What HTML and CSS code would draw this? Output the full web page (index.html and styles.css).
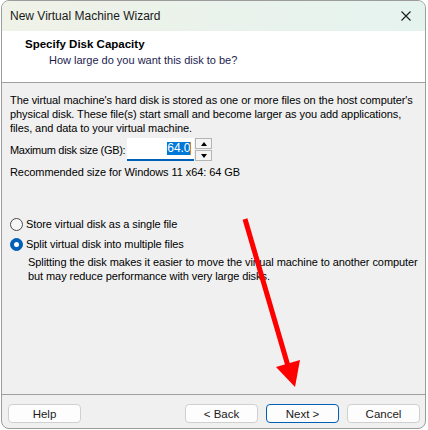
FILE: index.html
```html
<!DOCTYPE html>
<html lang="en">
<head>
    <meta charset="UTF-8">
    <title>New Virtual Machine Wizard</title>
    <link rel="stylesheet" href="styles.css">
</head>
<body>

    <div class="wizard">
        <!-- Title bar -->
        <div class="titlebar">
            <span class="title">New Virtual Machine Wizard</span>
            <svg class="close" width="10" height="10" viewBox="0 0 10 10">
                <path d="M0.5 0.5 L9.5 9.5 M9.5 0.5 L0.5 9.5" stroke="#1a1a1a" stroke-width="1.1" fill="none"/>
            </svg>
        </div>

        <!-- Page header -->
        <div class="header">
            <div class="header-title">Specify Disk Capacity</div>
            <div class="header-sub">How large do you want this disk to be?</div>
        </div>

        <!-- Page body -->
        <div class="content">
            <p class="intro">The virtual machine's hard disk is stored as one or more files on the host computer's physical disk. These file(s) start small and become larger as you add applications, files, and data to your virtual machine.</p>

            <div class="size-row">
                <label class="size-label">Maximum disk size (GB):</label>
                <div class="spin-input"><span class="selected">64.0</span><span class="caret"></span></div>
                <div class="spin-buttons">
                    <div class="spin-btn"><span class="tri-up"></span></div>
                    <div class="spin-btn"><span class="tri-down"></span></div>
                </div>
            </div>

            <p class="recommended">Recommended size for Windows 11 x64: 64 GB</p>

            <div class="options">
                <div class="radio-row"><span class="radio"></span>Store virtual disk as a single file</div>
                <div class="radio-row"><span class="radio checked"></span>Split virtual disk into multiple files</div>
            </div>
            <p class="note">Splitting the disk makes it easier to move the virtual machine to another computer<br>but may reduce performance with very large disks.</p>
        </div>

        <!-- Buttons -->
        <div class="footer">
            <button class="btn">Help</button>
            <div class="nav">
                <button class="btn">&lt; Back</button>
                <button class="btn default">Next &gt;</button>
                <button class="btn">Cancel</button>
            </div>
        </div>
    </div>

    <!-- Red pointer arrow -->
    <svg class="arrow" width="428" height="430" viewBox="0 0 428 430">
        <line x1="245" y1="219" x2="288" y2="366" stroke="#ff0000" stroke-width="5"/>
        <polygon points="276,367 300,360 295,387" fill="#ff0000"/>
    </svg>

</body>
</html>
```

FILE: styles.css
```css
/* Wizard dialog */
body {
    margin: 0;
    position: relative;
    background: #fff;
    font-family: 'Liberation Sans', Arial, sans-serif;
    font-size: 11px;
    color: #000;
}

.wizard {
    width: 425px;
    height: 429px;
    margin-left: 1px;
    box-sizing: border-box;
    border: 1px solid #9c9c9c;
    border-radius: 8px;
    overflow: hidden;
    background: #f0f0f0;
    display: flex;
    flex-direction: column;
}

/* Title bar */
.titlebar {
    height: 30px;
    flex-shrink: 0;
    display: flex;
    align-items: center;
    justify-content: space-between;
    padding: 0 8px 0 8px;
    background: linear-gradient(90deg, #eff2e7, #e5f3ef);
    font-size: 12px;
}

.title {
    color: #1a1a1a;
}

.close {
    margin-right: 6px;
}

/* Header */
.header {
    height: 52px;
    flex-shrink: 0;
    box-sizing: border-box;
    background: #fff;
    border-bottom: 1px solid #a0a0a0;
    padding: 6px 0 0 23px;
    line-height: 15px;
}

.header-title {
    font-weight: bold;
    font-size: 11.5px;
}

.header-sub {
    margin-top: 1px;
    padding-left: 24px;
    color: #1c1c50;
}

/* Body */
.content {
    flex: 1;
    padding: 10px 2px 0 8px;
    line-height: 14px;
    letter-spacing: -0.08px;
}

.content p {
    margin: 0;
}

.size-row {
    display: flex;
    align-items: center;
    margin-top: 3px;
    height: 23px;
}

.size-label {
    white-space: nowrap;
    letter-spacing: -0.3px;
    margin-right: 2px;
}

.spin-input {
    width: 67px;
    height: 23px;
    box-sizing: border-box;
    background: #fff;
    border-bottom: 2px solid #005fb8;
    display: flex;
    justify-content: flex-end;
    align-items: center;
    padding-right: 3px;
    padding-bottom: 1px;
}

.selected {
    background: #0078d7;
    color: #fff;
    line-height: 13px;
    font-size: 12px;
}

.caret {
    width: 1px;
    height: 13px;
    background: #e08020;
}

.spin-buttons {
    display: flex;
    flex-direction: column;
    gap: 1px;
    margin-left: 1px;
    height: 23px;
}

.spin-btn {
    width: 17px;
    height: 11px;
    box-sizing: border-box;
    border: 1px solid #b4b4b4;
    background: #f4f4f4;
    display: flex;
    align-items: center;
    justify-content: center;
}

.tri-up {
    border-left: 3px solid transparent;
    border-right: 3px solid transparent;
    border-bottom: 4px solid #000;
}

.tri-down {
    border-left: 3px solid transparent;
    border-right: 3px solid transparent;
    border-top: 4px solid #000;
}

.recommended {
    margin-top: 4px !important;
}

/* Disk file options */
.options {
    margin-top: 35px;
}

.radio-row {
    height: 20px;
    display: flex;
    align-items: center;
}

.radio {
    width: 13px;
    height: 13px;
    box-sizing: border-box;
    border: 1px solid #4a4a4a;
    border-radius: 50%;
    background: #f6f6f6;
    margin: 0 3px 0 0;
    position: relative;
}

.radio.checked {
    border-color: #005fb8;
    background: #005fb8;
}

.radio.checked::after {
    content: "";
    position: absolute;
    left: 3px;
    top: 3px;
    width: 5px;
    height: 5px;
    border-radius: 50%;
    background: #fff;
}

.note {
    margin-top: 1px !important;
    padding-left: 18px;
}

/* Footer buttons */
.footer {
    height: 34px;
    flex-shrink: 0;
    box-sizing: border-box;
    border-top: 1px solid #a0a0a0;
    display: flex;
    justify-content: space-between;
    align-items: flex-start;
    padding: 9px 5px 0 6px;
}

.nav {
    display: flex;
    gap: 8px;
}

.btn {
    width: 73px;
    height: 19px;
    padding: 0;
    box-sizing: border-box;
    border: 1px solid #d0d0d0;
    border-radius: 4px;
    background: #fdfdfd;
    font-family: inherit;
    font-size: 11.5px;
    color: #1a1a1a;
}

.btn.default {
    border-color: #005fb8;
}

/* Pointer arrow drawn over the dialog */
.arrow {
    position: absolute;
    left: 0;
    top: 0;
    pointer-events: none;
}
```
